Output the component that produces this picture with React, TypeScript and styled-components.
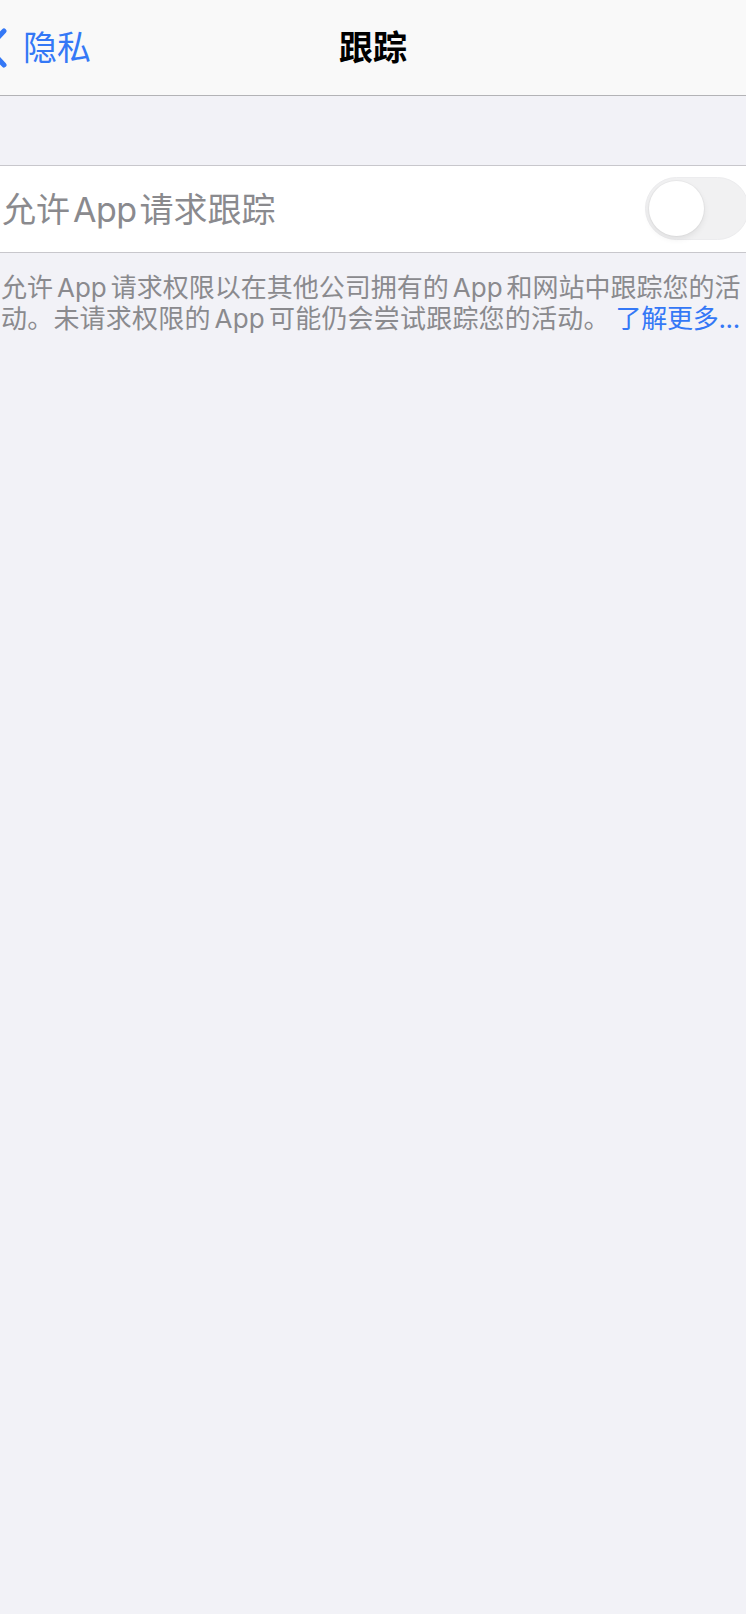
import React from "react";
import styled, { createGlobalStyle } from "styled-components";

const Global = createGlobalStyle`
  html, body {
    margin: 0;
    padding: 0;
    background: #f2f2f7;
    overflow: hidden;
  }
  body {
    font-family: "Inter", "Noto Sans CJK SC", "Noto Sans", sans-serif;
    -webkit-font-smoothing: antialiased;
  }
`;

const Page = styled.div`
  width: 746px;
  height: 1614px;
  background: #f2f2f7;
  overflow: hidden;
  display: flex;
  flex-direction: column;
`;

const NavBar = styled.header`
  height: 95px;
  background: #f9f9f9;
  border-bottom: 1px solid #b3b3b6;
  display: grid;
  grid-template-columns: 1fr auto 1fr;
  align-items: center;
  flex-shrink: 0;
`;

const BackButton = styled.div`
  display: flex;
  align-items: center;
  gap: 15px;
  color: #3478f6;
  font-size: 34px;
  line-height: 1;
  margin-left: -16px;
  margin-top: 1px;
`;

const Chevron = styled.svg`
  width: 24px;
  height: 40px;
  flex-shrink: 0;
`;

const Title = styled.h1`
  margin: 0;
  font-size: 34px;
  font-weight: 700;
  color: #000;
  line-height: 1;
  margin-top: 1px;
`;

const Spacer = styled.div`
  height: 69px;
  flex-shrink: 0;
`;

const Cell = styled.div`
  height: 86px;
  background: #fff;
  border-top: 1px solid #c8c7cc;
  border-bottom: 1px solid #c8c7cc;
  display: flex;
  align-items: center;
  justify-content: space-between;
  padding-left: 2px;
  flex-shrink: 0;
`;

const CellLabel = styled.span`
  font-size: 34px;
  color: #8a8a8e;
  white-space: nowrap;
  margin-top: -3px;
`;

const Latin = styled.span`
  letter-spacing: -0.5px;
`;

const Gap = styled.span<{ $w: number }>`
  display: inline-block;
  width: ${(p) => p.$w}px;
`;

const Toggle = styled.div`
  width: 104px;
  height: 63px;
  border-radius: 32px;
  background: #f1f1f2;
  box-sizing: border-box;
  border: 1px solid #ececee;
  margin-right: -3px;
  margin-top: -1px;
  display: flex;
  align-items: center;
  padding-left: 3px;
  flex-shrink: 0;
`;

const Knob = styled.div`
  width: 55px;
  height: 55px;
  border-radius: 50%;
  background: #fff;
  box-shadow: 0 3px 6px rgba(0, 0, 0, 0.08), 0 0 0 1px rgba(0, 0, 0, 0.03);
`;

const Footer = styled.p`
  margin: 0;
  padding: 19px 0 0 1px;
  font-size: 26px;
  line-height: 31px;
  color: #8a8a8e;
  white-space: nowrap;
`;

const Line = styled.span<{ $spacing?: number }>`
  letter-spacing: ${(p) => p.$spacing ?? 0}px;
`;

const Link = styled.span`
  color: #3478f6;
  letter-spacing: -0.3px;
`;

export default function App() {
  return (
    <Page>
      <Global />
      <NavBar>
        <BackButton>
          <Chevron viewBox="0 0 24 40">
            <path
              d="M20 3 L4 20 L20 37"
              fill="none"
              stroke="#3478f6"
              strokeWidth="5"
              strokeLinecap="round"
              strokeLinejoin="round"
            />
          </Chevron>
          <span>隐私</span>
        </BackButton>
        <Title>跟踪</Title>
        <div />
      </NavBar>
      <Spacer />
      <Cell>
        <CellLabel>
          允许<Gap $w={3} />
          <Latin>App</Latin>
          <Gap $w={3} />请求跟踪
        </CellLabel>
        <Toggle>
          <Knob />
        </Toggle>
      </Cell>
      <Footer>
        <Line>
          允许<Gap $w={4} />App<Gap $w={4} />请求权限以在其他公司拥有的<Gap $w={4} />App<Gap $w={4} />和网站中跟踪您的活
        </Line>
        <br />
        <Line $spacing={0.2}>
          动。未请求权限的<Gap $w={4} />App<Gap $w={4} />可能仍会尝试跟踪您的活动。<Gap $w={6} />
        </Line>
        <Link>了解更多...</Link>
      </Footer>
    </Page>
  );
}
